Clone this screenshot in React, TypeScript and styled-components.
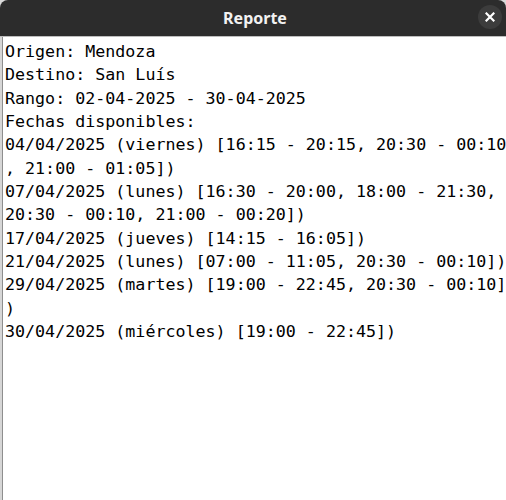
import styled, { createGlobalStyle } from "styled-components";
import { FC } from "react";

const GlobalStyle = createGlobalStyle`
  html, body {
    margin: 0;
    padding: 0;
    background: #d9d9d9;
    overflow: hidden;
  }
`;

interface Entry {
	lines: string[];
}

const header = [
	"Origen: Mendoza",
	"Destino: San Luís",
	"Rango: 02-04-2025 - 30-04-2025",
	"Fechas disponibles:",
];

// the dialog wraps long entries, kept here as they show on screen
const entries: Entry[] = [
	{ lines: ["04/04/2025 (viernes) [16:15 - 20:15, 20:30 - 00:10", ", 21:00 - 01:05])"] },
	{ lines: ["07/04/2025 (lunes) [16:30 - 20:00, 18:00 - 21:30,", "20:30 - 00:10, 21:00 - 00:20])"] },
	{ lines: ["17/04/2025 (jueves) [14:15 - 16:05])"] },
	{ lines: ["21/04/2025 (lunes) [07:00 - 11:05, 20:30 - 00:10])"] },
	{ lines: ["29/04/2025 (martes) [19:00 - 22:45, 20:30 - 00:10]", ")"] },
	{ lines: ["30/04/2025 (miércoles) [19:00 - 22:45])"] },
];

const CloseIcon: FC = () => (
	<svg width="10" height="10" viewBox="0 0 10 10">
		<path d="M1.5 1.5 L8.5 8.5 M8.5 1.5 L1.5 8.5" stroke="#ffffff" strokeWidth="2.2" strokeLinecap="square" />
	</svg>
);

const App: FC = () => {
	return (
		<>
			<GlobalStyle />
			<Window>
				<TitleBar>
					<span />
					<Title>Reporte</Title>
					<CloseButton aria-label="Cerrar">
						<CloseIcon />
					</CloseButton>
				</TitleBar>
				<Frame>
					<TextView>
						{header.map((line) => (
							<Line key={line}>{line}</Line>
						))}
						{entries.map((entry, i) =>
							entry.lines.map((line, j) => <Line key={`${i}-${j}`}>{line}</Line>)
						)}
					</TextView>
				</Frame>
			</Window>
		</>
	);
};

export default App;

const Window = styled.div`
  width: 506px;
  height: 500px;
  display: flex;
  flex-direction: column;
  border-radius: 8px 8px 0 0;
  overflow: hidden;
  background: #d6d6d6;
`;

const TitleBar = styled.div`
  height: 36px;
  flex: none;
  display: grid;
  grid-template-columns: 1fr auto 1fr;
  align-items: center;
  background: #2c2c2c;
  border-bottom: 1px solid #bdbdbd;
`;

const Title = styled.div`
  font-family: "Noto Sans", "Open Sans", sans-serif;
  font-weight: 700;
  font-size: 16px;
  color: #f2f2f2;
  padding-left: 4px;
  margin-top: -1px;
`;

const CloseButton = styled.button`
  justify-self: end;
  width: 24px;
  height: 24px;
  margin-right: 4px;
  margin-top: -2px;
  padding: 0;
  border: none;
  border-radius: 50%;
  background: #3c3c3c;
  display: flex;
  align-items: center;
  justify-content: center;
`;

const Frame = styled.div`
  flex: 1;
  display: flex;
  padding-left: 2px;
  background: #d6d6d6;
`;

const TextView = styled.div`
  flex: 1;
  background: #ffffff;
  border-left: 1px solid #8e8e8e;
  padding: 3px 0 0 2px;
  font-family: "DejaVu Sans Mono", monospace;
  font-size: 16.67px;
  line-height: 23.33px;
  color: #000000;
  overflow: hidden;
`;

const Line = styled.div`
  white-space: pre;
`;
